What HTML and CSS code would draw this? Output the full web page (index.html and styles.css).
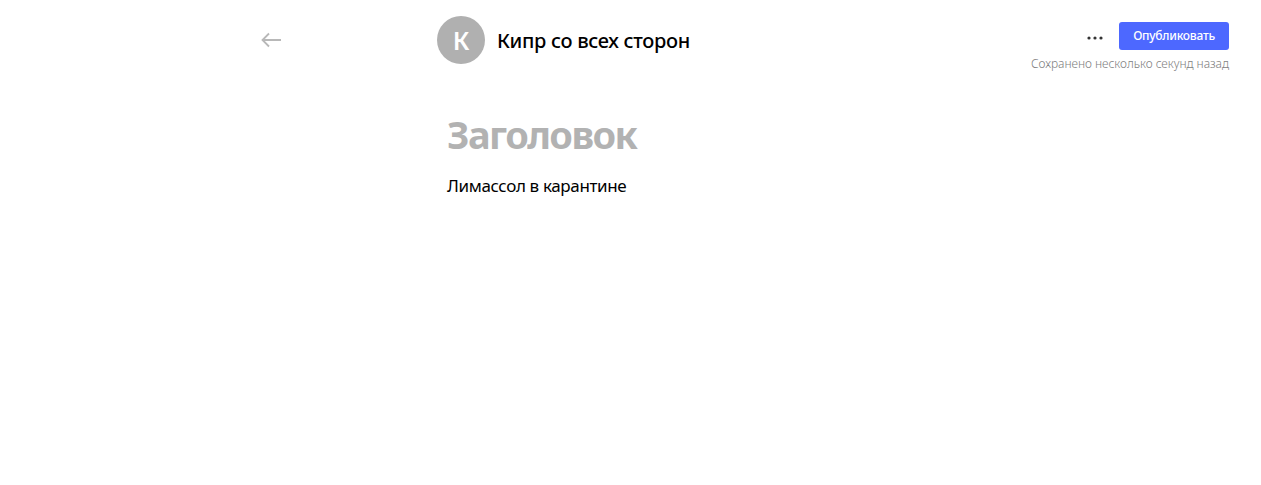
FILE: index.html
```html
<!DOCTYPE html>
<html lang="ru">
<head>
<meta charset="utf-8">
<title>Кипр со всех сторон</title>
<link rel="stylesheet" href="styles.css">
</head>
<body>
<header class="header">
  <a class="back" aria-label="Назад"><svg width="20" height="16" viewBox="0 0 20 16"><path d="M8 1.5 L1.5 8 L8 14.5 M1.5 8 H20"/></svg></a>
  <div class="channel">
    <div class="avatar"><span class="letter">К</span></div>
    <span class="name">Кипр со всех сторон</span>
  </div>
  <div class="actions">
    <div class="buttons">
      <svg class="more" width="16" height="4" viewBox="0 0 16 4"><circle cx="2" cy="2" r="1.6"/><circle cx="8" cy="2" r="1.6"/><circle cx="14" cy="2" r="1.6"/></svg>
      <button class="publish"><span class="publish-text">Опубликовать</span></button>
    </div>
    <span class="status">Сохранено несколько секунд назад</span>
  </div>
</header>
<main class="editor">
  <h1 class="title">Заголовок</h1>
  <p class="text">Лимассол в карантине</p>
</main>
</body>
</html>
```
FILE: styles.css
```css
body { margin: 0; background: #fff; color: #000; font-family: "Noto Sans", sans-serif; overflow: hidden; }
.header { display: flex; align-items: flex-start; height: 80px; padding: 0 32px 0 261px; box-sizing: border-box; white-space: nowrap; }
.back { width: 176px; padding-top: 32px; line-height: 0; }
.back svg { fill: none; stroke: #b8b8b8; stroke-width: 1.8; }
.channel { display: flex; align-items: center; gap: 12px; padding-top: 16px; }
.avatar { width: 48px; height: 48px; border-radius: 50%; background: #b0b0b0; color: #fff; display: flex; align-items: center; justify-content: center; font-size: 25px; font-weight: 600; }
.name { padding-top: 2px; font-size: 20px; line-height: 28px; font-weight: 500; letter-spacing: -0.31px; }
.actions { margin-left: auto; display: flex; flex-direction: column; align-items: flex-end; padding-top: 22px; }
.buttons { display: flex; align-items: center; gap: 16px; }
.more { fill: #333; margin-top: 4px; }
.publish { width: 110px; height: 28px; padding: 0; border: 0; border-radius: 3px; background: #4d68ff; color: #fff; font: 500 12px/28px "Noto Sans", sans-serif; letter-spacing: -0.25px; }
.status { margin-top: 5px; font-size: 12px; line-height: 18px; font-weight: 300; letter-spacing: -0.03px; color: #808080; }
.editor { padding: 32px 0 0 447px; white-space: nowrap; }
.title { margin: 0; font-size: 38px; line-height: 44px; font-weight: 700; letter-spacing: -1.55px; color: #b2b2b2; }
.text { margin: 18px 0 0; font-size: 17px; line-height: 24px; letter-spacing: -0.36px; }
```
